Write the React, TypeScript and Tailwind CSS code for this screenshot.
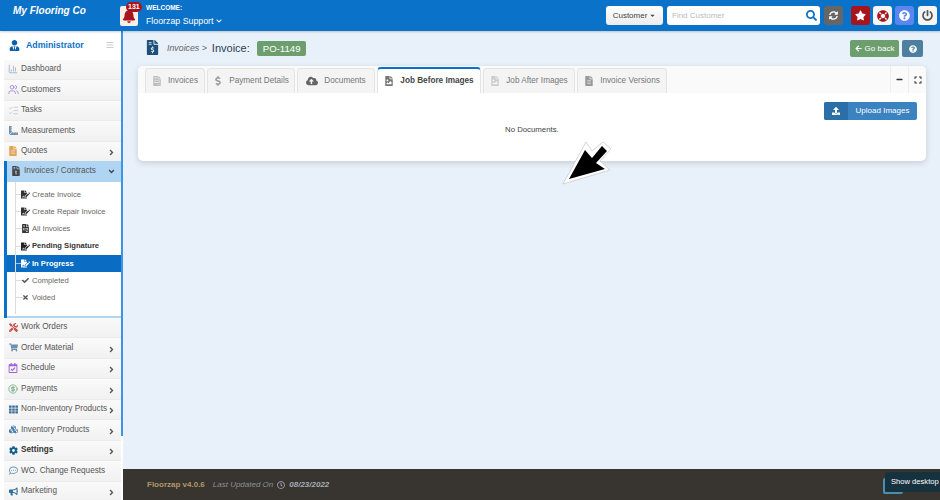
import React from "react";
import {
  FaAngleDown, FaAngleRight, FaArrowLeft, FaBars, FaBell, FaBullhorn, FaCaretDown, FaCheck, FaChevronDown, FaCloudUploadAlt, FaCog, FaCubes, FaDollarSign, FaExpand, FaFileAlt, FaFileImage, FaFileInvoice, FaFileInvoiceDollar, FaFileSignature, FaLifeRing, FaMinus, FaPowerOff, FaQuestionCircle, FaRegCalendarCheck, FaRegClock, FaRegCommentDots, FaRulerCombined, FaSearch, FaShoppingCart, FaStar, FaSyncAlt, FaTh, FaTimes, FaTools, FaUpload, FaUserTie,
} from "react-icons/fa";
import { ChartColumn, CircleDollarSign, ListChecks, Users } from "lucide-react";

const font = "font-['Liberation_Sans',Arial,sans-serif]";

function Row({ icon, label, arrow, bold }: { icon: React.ReactNode; label: string; arrow?: boolean; bold?: boolean }) {
  return (
    <div className={`h-[20.5px] flex items-center pl-[3px] pr-[5px] bg-gradient-to-b from-[#fafafa] to-[#f1f1f1] border-b border-[#ebebeb] text-[8.2px] ${bold ? "font-bold text-[#333]" : "text-[#555]"}`}>
      <span className="w-[12px] h-[13px] flex items-center justify-center shrink-0 mr-[2px]">{icon}</span>
      <span className="flex-1 whitespace-nowrap">{label}</span>
      {arrow && <FaAngleRight className="text-[#555] text-[9px] mt-[3px]" />}
    </div>
  );
}

function Sub({ icon, label, bold, active }: { icon: React.ReactNode; label: string; bold?: boolean; active?: boolean }) {
  return (
    <div className={`h-[17.2px] flex items-center text-[7.6px] ${active ? "bg-[#0b6cc4] text-white font-bold" : bold ? "text-[#333] font-bold" : "text-[#666]"}`}>
      <span className={`w-[11px] ml-[8px] h-px ${active ? "bg-white/60" : "bg-[#ddd]"}`} />
      <span className="w-[11px] flex items-center justify-center -ml-[6px] mr-[1px]">{icon}</span>
      <span className="whitespace-nowrap">{label}</span>
    </div>
  );
}

function Tab({ icon, label, active, w }: { icon: React.ReactNode; label: string; active?: boolean; w: string }) {
  return (
    <div className={`${w} flex items-center justify-center gap-[6px] text-[8.2px] rounded-t-[4px] border-x mr-[2px] ${active ? "h-[26px] bg-white border-[#e3e3e3] border-t-2 border-t-[#0b72c9] font-bold text-[#444]" : "h-[25px] bg-[#f4f4f4] border-t border-[#e3e3e3] text-[#777]"}`}>
      {icon}
      <span className="whitespace-nowrap">{label}</span>
    </div>
  );
}

function TopBtn({ bg, ml, children }: { bg: string; ml: string; children: React.ReactNode }) {
  return <div className={`${bg} ${ml} w-[19px] h-[19px] rounded-[3px] flex items-center justify-center`}>{children}</div>;
}

export default function App() {
  return (
    <div className={`${font} relative w-[940px] h-[500px] overflow-hidden flex flex-col bg-[#e8f0fa]`}>
      <header className="h-[31px] shrink-0 bg-[#0b72c9] flex items-center shadow-[0_1px_2px_rgba(0,0,0,0.2)] z-10">
        <div className="w-[120px] pl-[13px] text-white italic font-bold text-[10px] -mt-[10px]">My Flooring Co</div>
        <div className="relative w-[18px] h-[20px] bg-[#f7eee6] rounded-[2px] flex items-center justify-center">
          <FaBell className="text-[#a8141c] text-[14px]" />
          <span className="absolute -top-[4px] left-[6px] h-[10px] px-[2px] rounded-full bg-[#a8141c] text-white text-[7px] font-bold leading-[10px]">131</span>
        </div>
        <div className="ml-[8px] text-white">
          <div className="text-[6.5px] font-bold leading-[8px]">WELCOME:</div>
          <div className="text-[8.8px] leading-[14px] mt-[2px] flex items-center gap-[3px]">Floorzap Support <FaChevronDown className="text-[6px]" /></div>
        </div>
        <div className="flex-1" />
        <div className="w-[57px] h-[19px] bg-gradient-to-b from-white to-[#ececec] rounded-[3px] flex items-center justify-center gap-[2px] text-[8px] text-[#444]">Customer <FaCaretDown className="text-[7px]" /></div>
        <div className="ml-[4px] w-[153px] h-[19px] bg-white rounded-[3px] flex items-center justify-between pl-[5px] pr-[3px] text-[8px] text-[#bbb]">
          <span>Find Customer</span>
          <FaSearch className="text-[#0b72c9] text-[11px]" />
        </div>
        <TopBtn bg="bg-[#666]" ml="ml-[4px]"><FaSyncAlt className="text-white text-[9px]" /></TopBtn>
        <TopBtn bg="bg-[#a8141c]" ml="ml-[8px]"><FaStar className="text-white text-[11px]" /></TopBtn>
        <TopBtn bg="bg-[#f5f5f5]" ml="ml-[3px]"><FaLifeRing className="text-[#a8141c] text-[12px]" /></TopBtn>
        <TopBtn bg="bg-[#5c86ef]" ml="ml-[3px]"><FaQuestionCircle className="text-white text-[11px]" /></TopBtn>
        <TopBtn bg="bg-[#f5f5f5]" ml="ml-[4px] mr-[3px]"><FaPowerOff className="text-[#555] text-[11px]" /></TopBtn>
      </header>

      <div className="flex-1 flex min-h-0">
        <aside className="w-[123px] shrink-0 pl-[4px] bg-white overflow-hidden">
          <div className="w-[117px]">
            <div className="h-[28.5px] flex items-center pl-[5px] pr-[7px] bg-white">
              <FaUserTie className="text-[#0b5fa8] text-[11px] mr-[6px]" />
              <span className="text-[#0b72c9] font-bold text-[8.8px] flex-1">Administrator</span>
              <FaBars className="text-[#ccc] text-[8px]" />
            </div>
            <Row icon={<ChartColumn size={10} strokeWidth={1.5} className="text-[#7c99b5]" />} label="Dashboard" />
            <Row icon={<Users size={11} strokeWidth={1.5} className="text-[#8a6cd8]" />} label="Customers" />
            <Row icon={<ListChecks size={11} strokeWidth={1.3} className="text-[#a9b7c4]" />} label="Tasks" />
            <Row icon={<FaRulerCombined className="text-[#6d8fb0] text-[9px]" />} label="Measurements" />
            <Row icon={<FaFileAlt className="text-[#e0a558] text-[10px]" />} label="Quotes" arrow />
            <div className="border-l-[3px] border-[#0b72c9]">
              <div className="h-[20.5px] flex items-center bg-[#b0d5f2] pl-[3px] pr-[5px] text-[8.2px] text-[#555] -mt-px">
                <span className="w-[12px] flex items-center justify-center mr-[2px]"><FaFileInvoiceDollar className="text-[#444] text-[10px]" /></span>
                <span className="flex-1 whitespace-nowrap">Invoices / Contracts</span>
                <FaAngleDown className="text-[#444] text-[9px]" />
              </div>
              <div className="relative h-[136px] pt-[4.5px] border-b-2 border-[#b0d5f2] bg-white">
                <div className="absolute left-[8px] top-0 bottom-[2px] w-px bg-[#ddd]" />
                <Sub icon={<FaFileSignature className="text-[#333] text-[9px]" />} label="Create Invoice" />
                <Sub icon={<FaFileSignature className="text-[#333] text-[9px]" />} label="Create Repair Invoice" />
                <Sub icon={<FaFileInvoice className="text-[#333] text-[9px]" />} label="All Invoices" />
                <Sub icon={<FaFileSignature className="text-[#222] text-[9px]" />} label="Pending Signature" bold />
                <Sub icon={<FaFileSignature className="text-white text-[9px]" />} label="In Progress" active />
                <Sub icon={<FaCheck className="text-[#555] text-[7px]" />} label="Completed" />
                <Sub icon={<FaTimes className="text-[#555] text-[7px]" />} label="Voided" />
              </div>
            </div>
            <Row icon={<FaTools className="text-[#c9524e] text-[9px]" />} label="Work Orders" />
            <Row icon={<FaShoppingCart className="text-[#6d8fb0] text-[9px]" />} label="Order Material" arrow />
            <Row icon={<FaRegCalendarCheck className="text-[#9a63d8] text-[10px]" />} label="Schedule" arrow />
            <Row icon={<CircleDollarSign size={10} strokeWidth={1.5} className="text-[#4f9a66]" />} label="Payments" arrow />
            <Row icon={<FaTh className="text-[#3f6f96] text-[9px]" />} label="Non-Inventory Products" arrow />
            <Row icon={<FaCubes className="text-[#3b78a8] text-[9px]" />} label="Inventory Products" arrow />
            <Row icon={<FaCog className="text-[#0f5f8f] text-[9px]" />} label="Settings" arrow bold />
            <Row icon={<FaRegCommentDots className="text-[#6d9ab8] text-[9px]" />} label="WO. Change Requests" />
            <Row icon={<FaBullhorn className="text-[#2f6f9f] text-[9px]" />} label="Marketing" arrow />
          </div>
        </aside>

        <main className="relative flex-1 flex flex-col min-w-0">
          <div className="absolute -left-[2px] top-0 h-[405px] w-[2px] bg-[#3a95e6]" />
          <div className="flex-1 px-[15px]">
            <div className="h-[35px] flex items-center">
              <span className="ml-[7px] mr-[7px] -mt-[3px]"><FaFileInvoiceDollar className="text-[#1f4e79] text-[15px]" /></span>
              <span className="italic text-[8.8px] text-[#666] mr-[5px]">Invoices &gt;</span>
              <span className="text-[11px] text-[#2a3f55] mr-[7px]">Invoice:</span>
              <span className="h-[15px] px-[6px] rounded-[2px] bg-[#6d9e6d] text-white text-[9.6px] leading-[15px]">PO-1149</span>
              <div className="flex-1" />
              <div className="w-[49px] h-[17px] bg-[#6d9e6d] rounded-[2px] flex items-center justify-center gap-[3px] text-white text-[8px]"><FaArrowLeft className="text-[7px]" />Go back</div>
              <div className="ml-[3px] mr-[2px] w-[21px] h-[17px] bg-[#4f7f9f] rounded-[2px] flex items-center justify-center"><FaQuestionCircle className="text-white text-[8px]" /></div>
            </div>
            <section className="w-[788px] h-[95px] bg-white rounded-[5px] shadow-[0_2px_6px_rgba(0,0,0,0.15)] overflow-hidden">
              <div className="h-[27px] bg-[#fafafa] flex items-end pl-[7px] relative">
                <Tab w="w-[60px]" icon={<FaFileInvoice className="text-[#bbb] text-[10px]" />} label="Invoices" />
                <Tab w="w-[88px]" icon={<FaDollarSign className="text-[#999] text-[10px]" />} label="Payment Details" />
                <Tab w="w-[78px]" icon={<FaCloudUploadAlt className="text-[#666] text-[12px]" />} label="Documents" />
                <Tab w="w-[104px]" active icon={<FaFileImage className="text-[#777] text-[10px]" />} label="Job Before Images" />
                <Tab w="w-[92px]" icon={<FaFileImage className="text-[#ccc] text-[10px]" />} label="Job After Images" />
                <Tab w="w-[90px]" icon={<FaFileAlt className="text-[#999] text-[10px]" />} label="Invoice Versions" />
                <div className="flex-1" />
                <div className="absolute right-0 top-0 h-[27px] flex">
                  <div className="w-[18px] border-l border-[#eee] flex items-center justify-center"><FaMinus className="text-[#333] text-[7px]" /></div>
                  <div className="w-[18px] border-l border-[#eee] flex items-center justify-center"><FaExpand className="text-[#333] text-[8px]" /></div>
                </div>
              </div>
              <div className="relative h-[68px]">
                <div className="absolute right-[9px] top-[9px] w-[93px] h-[18px] bg-[#3a83c0] rounded-[2px] flex text-white text-[8px] overflow-hidden">
                  <span className="w-[24px] bg-[#2a6fa8] flex items-center justify-center"><FaUpload className="text-[8px]" /></span>
                  <span className="flex-1 flex items-center justify-center">Upload Images</span>
                </div>
                <div className="pt-[31px] pl-[367px] text-[7.8px] text-[#444]">No Documents.</div>
              </div>
            </section>
          </div>
          <footer className="h-[31px] shrink-0 bg-[#38342f] flex items-center pl-[24px] text-[8px]">
            <span className="font-bold text-[#b09868]">Floorzap v4.0.6</span>
            <span className="italic text-[#8a929a] ml-[8px]">Last Updated On</span>
            <FaRegClock className="text-[#aab] text-[8px] ml-[4px]" />
            <span className="italic font-bold text-[#a5adb5] ml-[4px]">08/23/2022</span>
          </footer>
        </main>
      </div>

      <svg className="absolute left-[560px] top-[140px]" width="52" height="46" viewBox="0 0 52 46">
        <path d="M3 44 L26 2 L32 11 L43 2 L51 9 L40 21 L50 30 Z" fill="#fff" stroke="#bbb" strokeWidth="0.6" />
        <path d="M9 39 L25 10 L32 18 L42 6 L47 11 L36 23 L45 29 Z" fill="#000" />
      </svg>
      <div className="absolute left-[883px] top-[478px] w-[20px] h-[16px] border-l-2 border-b-2 border-[#4b8fb0] rounded-[2px]" />
      <div className="absolute left-[885px] top-[472px] w-[55px] h-[20px] bg-[#16323f] rounded-l-[3px] text-white text-[7.6px] leading-[20px] pl-[6px] whitespace-nowrap">Show desktop</div>
    </div>
  );
}
